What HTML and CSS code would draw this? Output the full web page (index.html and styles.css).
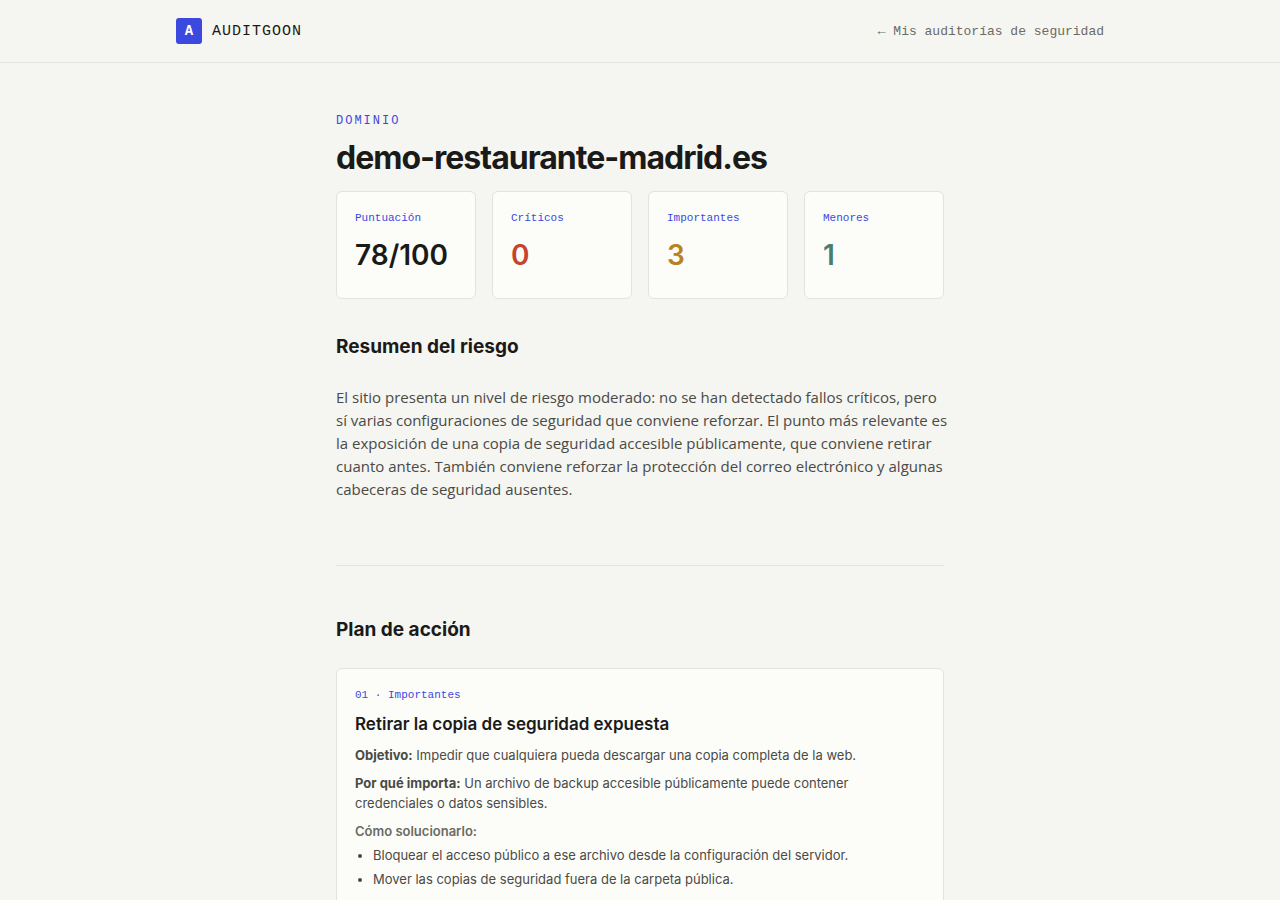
FILE: index.html
```html
<!DOCTYPE html>
<html lang="es">
<head>
<meta charset="utf-8">
<meta name="viewport" content="width=device-width, initial-scale=1">
<title>Auditgoon · demo-restaurante-madrid.es</title>
<link rel="stylesheet" href="styles.css">
</head>
<body>
<header class="topbar">
  <div class="topbar-inner">
    <a class="brand" href="#"><span class="brand-mark">A</span><span class="brand-name">AUDITGOON</span></a>
    <a class="back-link" href="#">← Mis auditorías de seguridad</a>
  </div>
</header>
<main class="report">
  <p class="eyebrow">DOMINIO</p>
  <h1 class="domain">demo-restaurante-madrid.es</h1>
  <div class="stats">
    <div class="card stat"><p class="label">Puntuación</p><p class="value">78/100</p></div>
    <div class="card stat"><p class="label">Críticos</p><p class="value critical">0</p></div>
    <div class="card stat"><p class="label">Importantes</p><p class="value important">3</p></div>
    <div class="card stat"><p class="label">Menores</p><p class="value minor">1</p></div>
  </div>
  <section class="summary">
    <h2 class="section-title">Resumen del riesgo</h2>
    <p class="summary-text">El sitio presenta un nivel de riesgo moderado: no se han detectado fallos críticos, pero sí varias configuraciones de seguridad que conviene reforzar. El punto más relevante es la exposición de una copia de seguridad accesible públicamente, que conviene retirar cuanto antes. También conviene reforzar la protección del correo electrónico y algunas cabeceras de seguridad ausentes.</p>
  </section>
  <section class="plan">
    <h2 class="section-title">Plan de acción</h2>
    <article class="card action">
      <p class="label">01 · Importantes</p>
      <h3 class="action-title">Retirar la copia de seguridad expuesta</h3>
      <p class="detail"><strong>Objetivo:</strong> Impedir que cualquiera pueda descargar una copia completa de la web.</p>
      <p class="detail"><strong>Por qué importa:</strong> Un archivo de backup accesible públicamente puede contener credenciales o datos sensibles.</p>
      <p class="steps-label">Cómo solucionarlo:</p>
      <ul class="steps">
        <li>Bloquear el acceso público a ese archivo desde la configuración del servidor.</li>
        <li>Mover las copias de seguridad fuera de la carpeta pública.</li>
      </ul>
    </article>
  </section>
</main>
</body>
</html>
```
FILE: styles.css
```css
* { box-sizing: border-box; }
body, p, h1, h2, h3, ul { margin: 0; }
body {
  background: #f5f5f1;
  color: #1a1a18;
  font-family: Inter, "Liberation Sans", sans-serif;
  font-size: 15px;
  line-height: 23px;
}
.topbar { border-bottom: 1px solid #e2e3dc; }
.topbar-inner {
  display: flex;
  align-items: center;
  justify-content: space-between;
  max-width: 976px;
  margin: 0 auto;
  padding: 18px 24px;
}
.brand, .back-link, .eyebrow, .label { font-family: "Liberation Mono", monospace; }
.brand {
  display: flex;
  align-items: center;
  gap: 10px;
  color: #1a1a18;
  text-decoration: none;
}
.brand-mark {
  display: grid;
  place-items: center;
  width: 26px;
  height: 26px;
  border-radius: 3px;
  background: #3b49df;
  color: #fff;
  font-size: 14px;
  font-weight: 700;
}
.brand-name { font-size: 15px; letter-spacing: 1px; }
.back-link { color: #6b6b64; font-size: 13px; text-decoration: none; }
.report { max-width: 656px; margin: 0 auto; padding: 49px 24px; }
.eyebrow { color: #3b49df; font-size: 12px; line-height: 18px; letter-spacing: 2px; }
.domain {
  margin: 8px 0 13px;
  font-size: 32px;
  line-height: 40px;
  font-weight: 700;
  letter-spacing: -1px;
}
.card { padding: 18px; border: 1px solid #e2e3dc; border-radius: 6px; background: #fcfdf9; }
.stats { display: grid; grid-template-columns: repeat(4, 1fr); gap: 16px; }
.stat { padding-bottom: 22px; }
.label { color: #3b49df; font-size: 11px; line-height: 16px; }
.value { margin-top: 8px; font-size: 28px; line-height: 42px; font-weight: 600; }
.critical { color: #c4442f; }
.important { color: #b8821f; }
.minor { color: #4a7c6f; }
.section-title { font-size: 19px; line-height: 32px; font-weight: 700; }
.summary { padding: 32px 0 64px; border-bottom: 1px solid #e2e3dc; }
.summary-text {
  margin: 23px -4px 0 0;
  color: #4a4a46;
  font-family: "Open Sans", "Liberation Sans", sans-serif;
}
.plan { padding-top: 48px; }
.action { margin-top: 22px; }
.action-title { margin: 8px 0; font-size: 17px; line-height: 26px; font-weight: 600; }
.detail { margin-bottom: 8px; color: #4a4a46; font-size: 13px; line-height: 20px; }
.steps-label { color: #6b6b64; font-size: 13px; line-height: 20px; font-weight: 600; }
.steps { padding-left: 18px; color: #4a4a46; font-size: 13px; line-height: 20px; }
.steps li { margin-top: 4px; }
```
